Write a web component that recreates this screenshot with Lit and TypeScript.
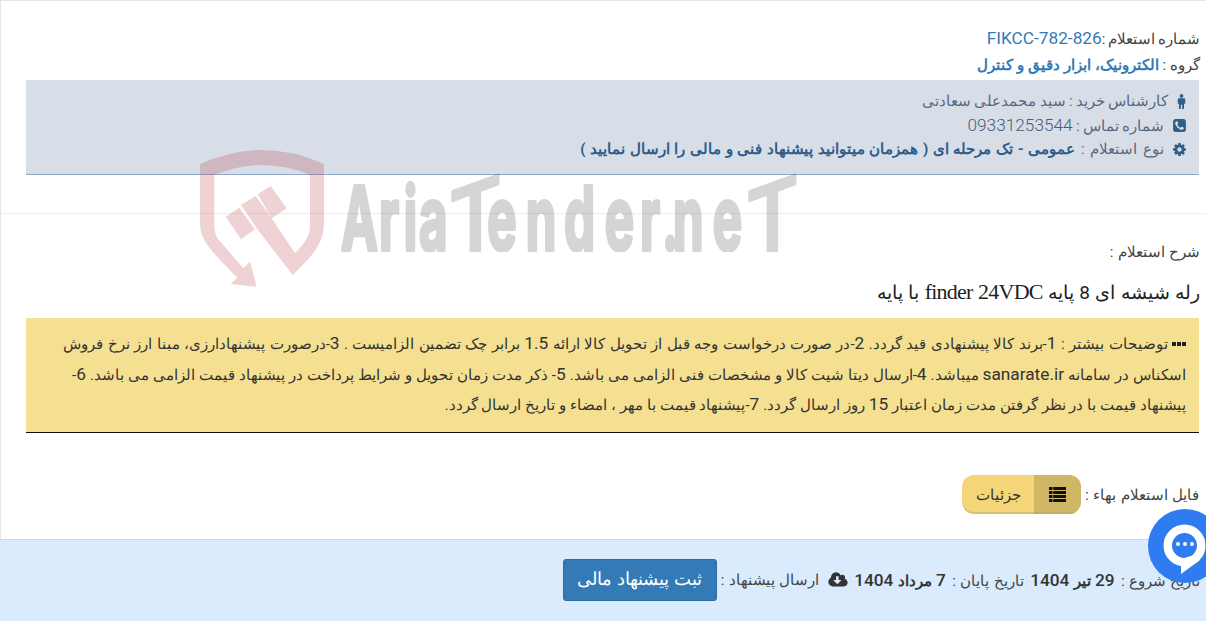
import { LitElement, html, css, svg } from "lit";
import { customElement } from "lit/decorators.js";

const P = {
  phone: "M1408 1193q0-11-2-16t-18-16.500-40.500-25-47.500-26.500-45.500-25-28.500-15.500q-5-3-19-13t-25-15-21-5q-15 0-36.500 20.500t-39.500 45-38.500 45-33.500 20.500q-7 0-16.500-3.500t-15.500-6.500-17-9.500-14-8.500q-99-55-170-126.500t-127-170.500q-2-3-8.500-14t-9.500-17-6.500-15.500-3.500-16.500q0-13 20.500-33.500t45-38.500 45-39.500 20.500-36.500q0-10-5-21t-15-25-13-19q-3-6-15-28.500t-25-45.500-26.500-47.500-25-40.500-16.500-18-16-2q-48 0-101 22-46 21-80 94.500t-34 130.500q0 16 2.500 34t5 30.500 9 33 10 29.500 12.500 33 11 30q60 164 216.500 320.500t320.500 216.500q6 2 30 11t33 12.500 29.500 10 33 9 30.500 5 34 2.500q57 0 130.500-34t94.500-80q22-53 22-101zm256-777v960q0 119-84.500 203.500t-203.500 84.500h-960q-119 0-203.500-84.500t-84.500-203.500v-960q0-119 84.500-203.500t203.500-84.500h960q119 0 203.500 84.500t84.500 203.500z",
  cog: "M1152 896q0-106-75-181t-181-75-181 75-75 181 75 181 181 75 181-75 75-181zm512-109v222q0 12-8 23t-20 13l-185 28q-19 54-39 91 35 50 107 138 10 12 10 25t-9 23q-27 37-99 108t-94 71q-12 0-26-9l-138-108q-44 23-91 38-16 136-29 186-7 28-36 28h-222q-14 0-24.500-8.500t-11.500-21.500l-28-184q-49-16-90-37l-141 107q-10 9-25 9-14 0-25-11-126-114-165-168-7-10-7-23 0-12 8-23 15-21 51-66.500t54-70.500q-27-50-41-99l-183-27q-13-2-21-12.500t-8-23.500v-222q0-12 8-23t19-13l186-28q14-46 39-92-40-57-107-138-10-12-10-24 0-10 9-23 26-36 98.500-107.500t94.500-71.500q13 0 26 10l138 107q44-23 91-38 16-136 29-186 7-28 36-28h222q14 0 24.500 8.500t11.500 21.500l28 184q49 16 90 37l142-107q9-9 24-9 13 0 25 10 129 119 165 170 7 8 7 22 0 12-8 23-15 21-51 66.500t-54 70.500q26 50 41 98l183 28q13 2 21 12.500t8 23.500z",
  cloud: "M1280 928q0-14-9-23t-23-9h-224v-352q0-13-9.500-22.500t-22.500-9.500h-192q-13 0-22.500 9.500t-9.500 22.500v352h-224q-13 0-22.500 9.500t-9.500 22.500q0 14 9 23l352 352q9 9 23 9t23-9l351-352q10-12 10-24zm640 224q0 159-112.500 271.500t-271.500 112.500h-1088q-185 0-316.500-131.500t-131.500-316.500q0-130 70-240t188-165q-2-30-2-43 0-212 150-362t362-150q156 0 285.500 87t188.500 231q71-62 166-62 106 0 181 75t75 181q0 76-41 138 130 31 213.500 135.500t83.500 238.500z",
};

/** Wrap Latin words and numbers so they take the larger Latin size. */
function t(s: string) {
  return s.split(/([A-Za-z0-9][A-Za-z0-9.]*[A-Za-z0-9]|[0-9])/).map((p, i) =>
    i % 2 ? html`<span class="l">${p}</span>` : p
  );
}

const N1 = " توضیحات بیشتر : 1-برند کالا پیشنهادی قید گردد. 2-در صورت درخواست وجه قبل از تحویل کالا ارائه 1.5 برابر چک تضمین الزامیست . 3-درصورت پیشنهادارزی، مبنا ارز نرخ فروش";
const N2 = "اسکناس در سامانه sanarate.ir میباشد. 4-ارسال دیتا شیت کالا و مشخصات فنی الزامی می باشد. 5- ذکر مدت زمان تحویل و شرایط پرداخت در پیشنهاد قیمت الزامی می باشد. 6-";
const N3 = "پیشنهاد قیمت با در نظر گرفتن مدت زمان اعتبار 15 روز ارسال گردد. 7-پیشنهاد قیمت با مهر ، امضاء و تاریخ ارسال گردد.";

@customElement("app-root")
export class AppRoot extends LitElement {
  static styles = css`
    :host {
      display: block;
      position: relative;
      width: 1206px;
      height: 621px;
      overflow: hidden;
      background: #fff;
      font-family: Roboto, "Noto Sans", sans-serif;
      font-size: 15px;
      word-spacing: 0.6px;
      color: #444;
    }
    .l { font-size: 17.25px; word-spacing: 0; }
    .page { direction: rtl; display: flex; flex-direction: column; height: 621px; border-top: 1px solid #e3e7ec; border-left: 1px solid #e3e7ec; box-sizing: border-box; }
    .top { height: 213px; border-bottom: 1px solid #eee; padding: 23px 7px 0 25px; box-sizing: border-box; flex: none; }
    .row { height: 28px; line-height: 28px; margin-right: -1px; }
    .row.c { word-spacing: -0.900px; }
    .row.g { line-height: 26px; word-spacing: 0.2px; }
    .code { color: #337ab7; font-size: 17.25px; }
    .grp { color: #337ab7; font-weight: 700; font-size: 15px; }
    .panel { background: #d8dee8; border-bottom: 1px solid #8fa9c9; height: 95px; padding: 9px 12px 0 0; box-sizing: border-box; color: #5a6a7e; }
    .panel .line { height: 24px; line-height: 24px; display: flex; align-items: center; gap: 8px; }
    .panel svg { width: 15px; height: 15px; fill: #2f5f88; flex: none; }
    .panel svg.m { width: 11px; }
    .panel .tight { word-spacing: -0.500px; }
    .panel .wide { word-spacing: 2px; }
    .panel .tel { font-size: 17.25px; font-weight: 300; color: #4c5c70; }
    .panel b { color: #2f5c8a; font-weight: 700; word-spacing: 0.9px; }
    .body { flex: 1; padding: 0 7px 0 25px; }
    .lbl { margin-top: 27px; height: 22px; line-height: 22px; margin-right: -1px; }
    .title { margin-top: 16px; height: 26px; line-height: 26px; font-size: 19px; color: #222; margin-right: -1px; }
    .title .en { font-family: "Liberation Serif", serif; font-size: 22px; letter-spacing: -0.75px; }
    .note { margin-top: 13px; height: 115px; box-sizing: border-box; border-bottom: 1px solid #111; background: #f5df91; padding: 11px 13px 0 13px; line-height: 29.5px; color: #333; font-size: 15px; white-space: nowrap; }
    .note svg { width: 14px; height: 14px; vertical-align: -2px; fill: #222; }
    .n1 { word-spacing: 0.75px; }
    .n2 { word-spacing: 0.28px; }
    .n3 { word-spacing: 0.15px; }
    .file { margin-top: 42px; display: flex; align-items: center; gap: 4px; font-size: 15.4px; }
    .btn { display: flex; width: 119px; height: 39px; border-radius: 12px; overflow: hidden; box-shadow: inset 0 -2px 0 rgba(0,0,0,.1); background: #f4d679; color: #333; font-size: 15px; }
    .btn .ic { width: 47px; background: #cfb766; display: flex; align-items: center; justify-content: center; order: -1; box-shadow: inset 0 -2px 0 rgba(0,0,0,.06); }
    .btn .t { flex: 1; display: flex; align-items: center; justify-content: center; }
    .ic svg { width: 17px; height: 16px; }
    .foot { flex: none; height: 82px; background: #d9ebfd; border-top: 1px solid #c9d9ea; display: flex; align-items: center; padding: 0 5.500px 1px 0; box-sizing: border-box; gap: 4px; margin-left: -1px; white-space: nowrap; }
    .dates { font-size: 15.3px; }
    .foot b { font-weight: 700; font-size: 15px; color: #333; margin: 0 2px; }
    .foot b .l { font-weight: 500; }
    .foot svg { width: 20px; height: 18px; fill: #333; margin-left: 5px; }
    .sub { display: inline-block; background: #337ab7; color: #fff; border: 1px solid #2e6da4; border-radius: 3px; font-size: 17.5px; width: 154px; height: 42px; line-height: 38px; text-align: center; box-sizing: border-box; }
    .wm { position: absolute; inset: 0; width: 1206px; height: 621px; pointer-events: none; }
    .chat { position: absolute; left: 1148px; top: 509px; width: 74px; height: 74px; border-radius: 50%; background: #2f7bf2; }
    .chat svg { width: 74px; height: 74px; display: block; }
  `;

  render() {
    return html`
      <div class="page">
        <div class="top">
          <div class="row c">شماره استعلام :<span class="code">FIKCC-782-826</span></div>
          <div class="row g">گروه : <span class="grp">الکترونیک، ابزار دقیق و کنترل</span></div>
          <div class="panel">
            <div class="line"><svg class="m" viewBox="0 0 11 16"><circle cx="5.500" cy="2" r="2"/><path d="M3 4.500h5q1.500 0 1.500 1.500v4.500h-1.300v5.500h-2v-4.500h-1.400v4.500h-2v-5.500h-1.300v-4.500q0-1.500 1.500-1.500z"/></svg><span class="tight">کارشناس خرید : سید محمدعلی سعادتی</span></div>
            <div class="line"><svg viewBox="0 0 1792 1792"><path d="${P.phone}"/></svg><span class="tight">شماره تماس : <span class="tel">09331253544</span></span></div>
            <div class="line"><svg viewBox="0 0 1792 1792"><path d="${P.cog}"/></svg><span class="wide">نوع استعلام : <b>عمومی - تک مرحله ای ( همزمان میتوانید پیشنهاد فنی و مالی را ارسال نمایید )</b></span></div>
          </div>
        </div>
        <div class="body">
          <div class="lbl">شرح استعلام :</div>
          <div class="title">رله شیشه ای 8 پایه <span class="en">finder 24VDC</span> با پایه</div>
          <div class="note">
            <div class="n1"><svg viewBox="0 0 14 14"><rect x="0" y="5" width="4" height="4"/><rect x="5" y="5" width="4" height="4"/><rect x="10" y="5" width="4" height="4"/></svg>${t(N1)}</div>
            <div class="n2">${t(N2)}</div>
            <div class="n3">${t(N3)}</div>
          </div>
          <div class="file">
            <span>فایل استعلام بهاء :</span>
            <div class="btn"><div class="t">جزئیات</div><div class="ic"><svg viewBox="0 0 17 16" fill="#111"><rect width="3.500" height="3"/><rect x="4.200" width="12.800" height="3"/><rect y="4" width="3.500" height="3"/><rect x="4.200" y="4" width="12.800" height="3"/><rect y="8" width="3.500" height="3"/><rect x="4.200" y="8" width="12.800" height="3"/><rect y="12" width="3.500" height="3"/><rect x="4.200" y="12" width="12.800" height="3"/></svg></div></div>
          </div>
        </div>
        <div class="foot">
          <span class="dates">تاریخ شروع : <b>${t("29 تیر 1404")}</b> تاریخ پایان : <b>${t("7 مرداد 1404")}</b></span>
          <svg viewBox="0 0 1920 1792"><path d="${P.cloud}"/></svg>
          <span>ارسال پیشنهاد :</span>
          <span class="sub">ثبت پیشنهاد مالی</span>
        </div>
      </div>
      <svg class="wm" viewBox="0 0 1206 621">
        ${svg`
        <g fill="#b0202a" fill-opacity=".2">
          <path d="M200 164Q262 136 324 164L324 223C324 245 310 258 292.700 275L256.700 228.300 271.700 218.300 295 253.300C305 243 310 235 310 227L310 175Q262 155 214.300 175L214.300 223C214 235 218 240 221.700 243L243.300 268.300 250 261.700 256.700 286.700 230.700 284 237.300 277.700C210 250 200 240 200 223Z"/>
          <path d="M225.700 216.700L239.300 207.700 255 229.300 241 239.300Z"/>
          <path d="M241 205L255.700 196 271.700 218.300 256.700 228.300Z"/>
          <path d="M257.700 194.300L270.700 186 286.700 208.300 271.700 218.300Z"/>
        </g>
        <clipPath id="wmclip"><rect x="300" y="140" width="520" height="112"/></clipPath>
        <g opacity=".16" fill="#000" stroke="#000" stroke-linejoin="round" font-family="Inter, sans-serif" clip-path="url(#wmclip)">
          <g transform="scale(.56 1)" stroke-width="4" font-size="88" font-weight="700">
            <text y="250" x="609 677 721 748">Aria</text>
            <text y="250" x="870 939 1007 1080 1143 1182 1202 1273">ender.ne</text>
          </g>
          <g stroke-width="3" font-size="95" font-weight="500">
            <text transform="translate(449 262) skewY(-20) scale(.85 1)">T</text>
            <text transform="translate(746 262) skewY(-20) scale(.85 1)">T</text>
          </g>
        </g>`}
      </svg>
      <div class="chat"><svg viewBox="0 0 74 74"><circle cx="36.500" cy="36.500" r="16.750" fill="none" stroke="#fff" stroke-width="8.500"/><path fill="#fff" d="M33 50V65L52 51 43 47Z"/><circle cx="30" cy="35" r="2" fill="#fff"/><circle cx="37" cy="35" r="2" fill="#fff"/><circle cx="44" cy="35" r="2" fill="#fff"/></svg></div>
    `;
  }
}
